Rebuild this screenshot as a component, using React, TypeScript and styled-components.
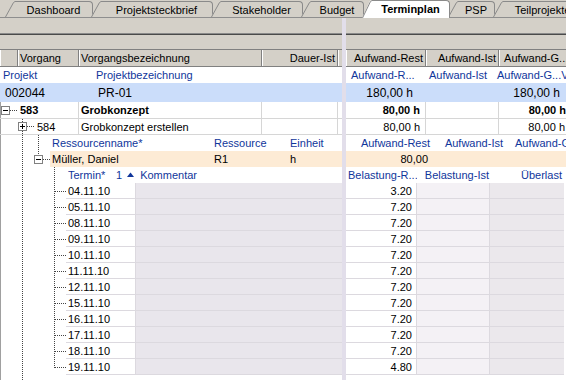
import styled, { createGlobalStyle } from "styled-components";

const GlobalStyle = createGlobalStyle`
  html, body { margin: 0; padding: 0; background: #fff; }
  body {
    font-family: "Liberation Sans", Arial, sans-serif;
    font-size: 11px;
    color: #000;
  }
`;

const BLUE = "#10369b";
const GRID = "#d6d6d6";
const FACE = "#d4d0c8";

const Screen = styled.div`
  width: 566px;
  height: 380px;
  overflow: hidden;
  display: flex;
  flex-direction: column;
  background: #fff;
`;

/* ---------- tabs ---------- */
const TabStrip = styled.div`
  display: flex;
  align-items: flex-end;
  height: 18px;
  flex: none;
  padding-left: 5px;
  overflow: hidden;
  background: linear-gradient(to top, #8e8e8e 0 1px, ${FACE} 1px);
`;

const Tab = styled.div<{ $active?: boolean }>`
  display: flex;
  flex: none;
  margin-left: -2px;
  margin-bottom: ${(p) => (p.$active ? 0 : 1)}px;
  height: ${(p) => (p.$active ? 18 : 16)}px;
  position: relative;
  z-index: ${(p) => (p.$active ? 2 : 1)};
  &:first-child { margin-left: 0; }
`;

const TabBody = styled.div<{ $w: number; $active?: boolean }>`
  width: ${(p) => p.$w}px;
  box-sizing: border-box;
  border-top: 1px solid #8a8a8a;
  border-right: 1px solid #8a8a8a;
  border-top-right-radius: 4px;
  background: ${(p) => (p.$active ? "#fff" : FACE)};
  font-weight: ${(p) => (p.$active ? 700 : 400)};
  display: flex;
  align-items: center;
  justify-content: center;
  white-space: nowrap;
  overflow: hidden;
  padding-bottom: ${(p) => (p.$active ? 2 : 0)}px;
`;

const TabSlant = ({ h, active }: { h: number; active?: boolean }) => (
  <svg width={10} height={h} style={{ display: "block", flex: "none" }}>
    <polygon points={`0,${h} 8,1 10,0 10,${h}`} fill={active ? "#fff" : FACE} />
    <polyline
      points={`0.5,${h} 8.5,1.5 10,0.5`}
      fill="none"
      stroke="#8a8a8a"
      strokeWidth={1}
    />
  </svg>
);

const tabs: { label: string; w: number; active?: boolean }[] = [
  { label: "Dashboard", w: 78 },
  { label: "Projektsteckbrief", w: 112 },
  { label: "Stakeholder", w: 82 },
  { label: "Budget", w: 53 },
  { label: "Terminplan", w: 78, active: true },
  { label: "PSP", w: 37 },
  { label: "Teilprojekte", w: 80 },
];

/* ---------- workspace ---------- */
const Workspace = styled.div`
  display: flex;
  flex: 1;
  min-height: 0;
`;

const Pane = styled.div<{ $w?: number }>`
  display: flex;
  flex-direction: column;
  flex: ${(p) => (p.$w ? `0 0 ${p.$w}px` : "1 1 auto")};
  min-width: 0;
  overflow: hidden;
`;

const Splitter = styled.div`
  flex: 0 0 4px;
  background: #e2deea;
`;

const ToolBand = styled.div`
  height: 17px;
  flex: none;
  background: linear-gradient(to top, #4a4a4a 0 1px, #8a8a8a 1px 2px, ${FACE} 2px);
`;

const FilterBand = styled.div`
  height: 15px;
  flex: none;
  background: linear-gradient(to top, #808080 0 1px, ${FACE} 1px);
`;

const Row = styled.div<{ $h: number; $bg?: string; $line?: boolean }>`
  display: flex;
  flex: none;
  height: ${(p) => p.$h}px;
  box-sizing: border-box;
  background: ${(p) => p.$bg ?? "transparent"};
  border-bottom: ${(p) => (p.$line ? `1px solid ${GRID}` : "none")};
`;

const HeadCell = styled.div<{ $w?: number; $right?: boolean }>`
  flex: ${(p) => (p.$w ? `0 0 ${p.$w}px` : "1 1 auto")};
  box-sizing: border-box;
  height: 17px;
  display: flex;
  align-items: center;
  justify-content: ${(p) => (p.$right ? "flex-end" : "flex-start")};
  padding: 0 2px;
  background: ${FACE};
  border-right: 1px solid #808080;
  border-bottom: 1px solid #808080;
  box-shadow: inset 1px 0 #fff;
  white-space: nowrap;
  overflow: hidden;
`;

type Tone = "blue" | "bold" | "big";

const Cell = styled.div<{
  $w?: number;
  $right?: boolean;
  $pl?: number;
  $pr?: number;
  $tone?: Tone;
  $sep?: boolean;
  $bg?: string;
}>`
  flex: ${(p) => (p.$w ? `0 0 ${p.$w}px` : "1 1 auto")};
  box-sizing: border-box;
  display: flex;
  align-items: center;
  justify-content: ${(p) => (p.$right ? "flex-end" : "flex-start")};
  padding-left: ${(p) => p.$pl ?? 2}px;
  padding-right: ${(p) => p.$pr ?? 0}px;
  white-space: nowrap;
  overflow: hidden;
  background: ${(p) => p.$bg ?? "transparent"};
  border-right: ${(p) => (p.$sep ? `1px solid ${GRID}` : "none")};
  color: ${(p) => (p.$tone === "blue" ? BLUE : "#000")};
  font-weight: ${(p) => (p.$tone === "bold" ? 700 : 400)};
  font-size: ${(p) => (p.$tone === "big" ? 12 : 11)}px;
`;

const TreeCell = styled.div<{ $w: number }>`
  flex: 0 0 ${(p) => p.$w}px;
  display: flex;
  align-items: stretch;
  box-sizing: border-box;
  border-right: 1px solid ${GRID};
  overflow: hidden;
`;

const GridCell = styled.div<{ $w?: number; $bg: string; $right?: boolean; $edge?: boolean }>`
  flex: ${(p) => (p.$w ? `0 0 ${p.$w}px` : "1 1 auto")};
  box-sizing: border-box;
  display: flex;
  align-items: center;
  justify-content: ${(p) => (p.$right ? "flex-end" : "flex-start")};
  padding: 0 4px 0 2px;
  background: ${(p) => p.$bg};
  border-bottom: 1px solid #dcd9df;
  border-right: ${(p) => (p.$edge ? "1px solid #dcd9df" : "none")};
`;

const SortMark = () => (
  <svg width={7} height={5} style={{ margin: "0 6px 1px 5px" }}>
    <polygon points="0,5 3.5,0.5 7,5" fill={BLUE} />
  </svg>
);

/* tree connector drawing */
type Box = { x: number; y: number; plus?: boolean };
const TreeGuide = ({
  w,
  h,
  v = [],
  hz,
  box,
}: {
  w: number;
  h: number;
  v?: [number, number, number][];
  hz?: [number, number, number];
  box?: Box;
}) => (
  <svg width={w} height={h} style={{ display: "block", flex: "none" }} shapeRendering="crispEdges">
    <line x1={0.5} y1={0} x2={0.5} y2={h} stroke="#a0a0a0" />
    {v.map(([x, y1, y2], i) => (
      <line key={i} x1={x + 0.5} y1={y1} x2={x + 0.5} y2={y2} stroke="#444" strokeDasharray="1 1" />
    ))}
    {hz && (
      <line x1={hz[0]} y1={hz[2] + 0.5} x2={hz[1]} y2={hz[2] + 0.5} stroke="#444" strokeDasharray="1 1" />
    )}
    {box && (
      <g>
        <rect x={box.x + 0.5} y={box.y + 0.5} width={8} height={8} fill="#fff" stroke="#808080" />
        <line x1={box.x + 2} y1={box.y + 4.5} x2={box.x + 7} y2={box.y + 4.5} stroke="#000" />
        {box.plus && (
          <line x1={box.x + 4.5} y1={box.y + 2} x2={box.x + 4.5} y2={box.y + 7} stroke="#000" />
        )}
      </g>
    )}
  </svg>
);

const dates: [string, string][] = [
  ["04.11.10", "3.20"],
  ["05.11.10", "7.20"],
  ["08.11.10", "7.20"],
  ["09.11.10", "7.20"],
  ["10.11.10", "7.20"],
  ["11.11.10", "7.20"],
  ["12.11.10", "7.20"],
  ["15.11.10", "7.20"],
  ["16.11.10", "7.20"],
  ["17.11.10", "7.20"],
  ["18.11.10", "7.20"],
  ["19.11.10", "4.80"],
];

const BLUE_ROW = "#cbddfa";
const PEACH = "#fdebd5";

export default function App() {
  return (
    <>
      <GlobalStyle />
      <Screen>
        <TabStrip>
          {tabs.map((t) => (
            <Tab key={t.label} $active={t.active}>
              <TabSlant h={t.active ? 18 : 16} active={t.active} />
              <TabBody $w={t.w} $active={t.active}>
                {t.label}
              </TabBody>
            </Tab>
          ))}
        </TabStrip>

        <Workspace>
          {/* left pane */}
          <Pane $w={342}>
            <ToolBand />
            <FilterBand />
            <Row $h={17}>
              <HeadCell $w={18} />
              <HeadCell $w={61}>Vorgang</HeadCell>
              <HeadCell $w={183}>Vorgangsbezeichnung</HeadCell>
              <HeadCell $w={76} $right>
                Dauer-Ist
              </HeadCell>
              <HeadCell />
            </Row>
            <Row $h={16}>
              <Cell $w={96} $pl={3} $tone="blue">Projekt</Cell>
              <Cell $tone="blue" $pl={0}>Projektbezeichnung</Cell>
            </Row>
            <Row $h={19} $bg={BLUE_ROW}>
              <Cell $w={98} $pl={5} $tone="big">002044</Cell>
              <Cell $pl={0} $tone="big">PR-01</Cell>
            </Row>
            <Row $h={17} $line>
              <TreeCell $w={79}>
                <TreeGuide w={18} h={16} hz={[10, 18, 8]} box={{ x: 1, y: 4 }} />
                <Cell $tone="bold">583</Cell>
              </TreeCell>
              <Cell $w={183} $sep $tone="bold">Grobkonzept</Cell>
              <Cell $w={76} $sep />
              <Cell />
            </Row>
            <Row $h={16} $line>
              <TreeCell $w={79}>
                <TreeGuide w={35} h={15} v={[[22, 0, 15]]} hz={[27, 35, 7]} box={{ x: 18, y: 3, plus: true }} />
                <Cell>584</Cell>
              </TreeCell>
              <Cell $w={183} $sep>Grobkonzept erstellen</Cell>
              <Cell $w={76} $sep />
              <Cell />
            </Row>
            <Row $h={16}>
              <TreeGuide w={50} h={16} v={[[22, 0, 16], [38, 0, 16]]} />
              <Cell $w={164} $tone="blue">Ressourcenname*</Cell>
              <Cell $w={76} $pl={0} $tone="blue">Ressource</Cell>
              <Cell $pl={0} $tone="blue">Einheit</Cell>
            </Row>
            <Row $h={16}>
              <TreeGuide w={50} h={16} v={[[22, 0, 16], [38, 0, 8]]} hz={[43, 50, 8]} box={{ x: 34, y: 4 }} />
              <Cell $w={164} $bg={PEACH}>Müller, Daniel</Cell>
              <Cell $w={76} $pl={0} $bg={PEACH}>R1</Cell>
              <Cell $pl={0} $bg={PEACH}>h</Cell>
            </Row>
            <Row $h={16}>
              <TreeGuide w={66} h={16} v={[[22, 0, 16], [54, 0, 16]]} />
              <Cell $w={50} $tone="blue">Termin*</Cell>
              <Cell $pl={0} $tone="blue">
                1<SortMark />Kommentar
              </Cell>
            </Row>
            {dates.map(([d], i) => (
              <Row $h={16} key={d}>
                <TreeGuide
                  w={66}
                  h={16}
                  v={[[22, 0, 16], [54, 0, i === dates.length - 1 ? 9 : 16]]}
                  hz={[55, 66, 8]}
                />
                <GridCell $w={70} $bg="#fff" $edge>
                  {d}
                </GridCell>
                <GridCell $bg="#e9e6ec" />
              </Row>
            ))}
            <Row $h={8}>
              <TreeGuide w={66} h={8} v={[[22, 0, 8]]} />
            </Row>
          </Pane>

          <Splitter />

          {/* right pane */}
          <Pane>
            <ToolBand />
            <FilterBand />
            <Row $h={17}>
              <HeadCell $w={80} $right>Aufwand-Rest</HeadCell>
              <HeadCell $w={73} $right>Aufwand-Ist</HeadCell>
              <HeadCell $w={80}>&nbsp;Aufwand-G...</HeadCell>
            </Row>
            <Row $h={16}>
              <Cell $w={80} $pl={5} $tone="blue">Aufwand-R...</Cell>
              <Cell $w={70} $pl={3} $tone="blue">Aufwand-Ist</Cell>
              <Cell $w={90} $pl={1} $tone="blue">Aufwand-G...Vorgabe</Cell>
            </Row>
            <Row $h={19} $bg={BLUE_ROW}>
              <Cell $w={71} $right $pr={4} $tone="big">180,00 h</Cell>
              <Cell $w={73} />
              <Cell $w={76} $right $pr={6} $tone="big">180,00 h</Cell>
            </Row>
            <Row $h={17} $line>
              <Cell $w={80} $sep $right $pr={5} $tone="bold">80,00 h</Cell>
              <Cell $w={73} $sep />
              <Cell $w={67} $right $pr={0} $tone="bold">80,00 h</Cell>
            </Row>
            <Row $h={16} $line>
              <Cell $w={80} $sep $right $pr={5}>80,00 h</Cell>
              <Cell $w={73} $sep />
              <Cell $w={67} $right $pr={1}>80,00 h</Cell>
            </Row>
            <Row $h={16}>
              <Cell $w={86} $right $pr={2} $tone="blue">Aufwand-Rest</Cell>
              <Cell $w={73} $right $pr={2} $tone="blue">Aufwand-Ist</Cell>
              <Cell $w={80} $pl={10} $tone="blue">Aufwand-Gesamt</Cell>
            </Row>
            <Row $h={16} $bg={PEACH}>
              <Cell $w={86} $right $pr={4}>80,00</Cell>
            </Row>
            <Row $h={16}>
              <Cell $w={71} $pl={2} $tone="blue">Belastung-R...</Cell>
              <Cell $w={73} $right $pr={1} $tone="blue">Belastung-Ist</Cell>
              <Cell $w={74} $right $pr={2} $tone="blue">Überlast</Cell>
            </Row>
            {dates.map(([d, v]) => (
              <Row $h={16} key={d}>
                <GridCell $w={71} $bg="#fff" $right $edge>
                  {v}
                </GridCell>
                <GridCell $w={73} $bg="#f4f1f5" $edge />
                <GridCell $w={74} $bg="#ebe8ec" />
              </Row>
            ))}
          </Pane>
        </Workspace>
      </Screen>
    </>
  );
}
